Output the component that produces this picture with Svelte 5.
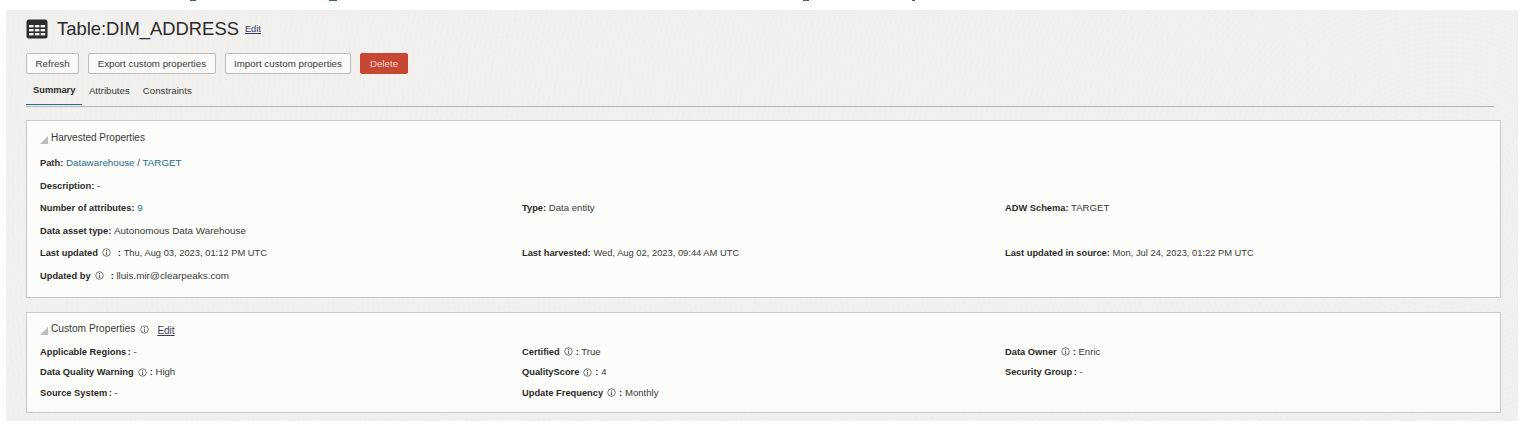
<script>
  const attrRow = [
    { label: 'Number of attributes:', value: '9', link: true },
    { label: 'Type:', value: 'Data entity' },
    { label: 'ADW Schema:', value: 'TARGET' }
  ];
  const customRows = [
    [{ label: 'Applicable Regions', value: '-' }, { label: 'Certified', info: true, value: 'True' }, { label: 'Data Owner', info: true, value: 'Enric' }],
    [{ label: 'Data Quality Warning', info: true, value: 'High' }, { label: 'QualityScore', info: true, value: '4' }, { label: 'Security Group', value: '-' }],
    [{ label: 'Source System', value: '-' }, { label: 'Update Frequency', info: true, value: 'Monthly' }, null]
  ];
</script>

{#snippet info()}
  <svg class="info" viewBox="0 0 10 10" width="9" height="9" aria-hidden="true">
    <circle cx="5" cy="5" r="4.2" fill="none" stroke="#444" stroke-width="0.8" />
    <path d="M5 4.3v3M4.2 7.3h1.6M4.3 4.3h.7" fill="none" stroke="#444" stroke-width="0.8" />
    <rect x="4.5" y="2.3" width="1" height="1" fill="#444" />
  </svg>
{/snippet}

{#snippet triangle()}
  <svg class="tri" viewBox="0 0 8 8" width="8" height="8" aria-hidden="true">
    <path d="M0 8L8 0V8Z" fill="#bdbdbb" />
  </svg>
{/snippet}

<!-- bottoms of the heading above, cut off by the top edge of the shot -->
<span class="cut c1"></span>
<span class="cut c2"></span>
<span class="cut c3"></span>
<span class="cut c4"></span>

<div class="page">
  <div class="title-row">
    <svg class="table-icon" viewBox="0 0 22 20" width="22" height="20" aria-hidden="true">
      <rect x="0.5" y="0.5" width="21" height="19" rx="2.5" fill="#2b2b2b" />
      <g fill="#f1f0ee">
        <rect x="3" y="6" width="4.6" height="2.4" /><rect x="8.8" y="6" width="4.6" height="2.4" /><rect x="14.6" y="6" width="4.6" height="2.4" />
        <rect x="3" y="10" width="4.6" height="2.4" /><rect x="8.8" y="10" width="4.6" height="2.4" /><rect x="14.6" y="10" width="4.6" height="2.4" />
        <rect x="3" y="14" width="4.6" height="2.4" /><rect x="8.8" y="14" width="4.6" height="2.4" /><rect x="14.6" y="14" width="4.6" height="2.4" />
      </g>
    </svg>
    <h1>Table:DIM_ADDRESS</h1>
    <a class="edit small" href="#edit">Edit</a>
  </div>

  <div class="actions">
    <button>Refresh</button>
    <button>Export custom properties</button>
    <button>Import custom properties</button>
    <button class="danger">Delete</button>
  </div>

  <div class="tabs">
    <span class="tab active">Summary</span>
    <span class="tab">Attributes</span>
    <span class="tab">Constraints</span>
  </div>

  <section class="panel harvested">
    <div class="panel-head">{@render triangle()}<span>Harvested Properties</span></div>
    <div class="row"><b>Path:</b> <a href="#p">Datawarehouse</a> / <a href="#t">TARGET</a></div>
    <div class="row"><b>Description:</b> -</div>
    <div class="grid">
      {#each attrRow as item}
        <div class="row"><b>{item.label}</b> {#if item.link}<a href="#n">{item.value}</a>{:else}{item.value}{/if}</div>
      {/each}
    </div>
    <div class="row"><b>Data asset type:</b> <span class="long">Autonomous Data Warehouse</span></div>
    <div class="grid">
      <div class="row"><b>Last updated</b>{@render info()}<b class="colon wide">:</b> <span class="date">Thu, Aug 03, 2023, 01:12 PM UTC</span></div>
      <div class="row"><b>Last harvested:</b> <span class="date">Wed, Aug 02, 2023, 09:44 AM UTC</span></div>
      <div class="row"><b>Last updated in source:</b> <span class="date">Mon, Jul 24, 2023, 01:22 PM UTC</span></div>
    </div>
    <div class="row"><b>Updated by</b>{@render info()}<b class="colon wide">:</b> <span class="long">lluis.mir@clearpeaks.com</span></div>
  </section>

  <section class="panel custom">
    <div class="panel-head">
      {@render triangle()}<span>Custom Properties</span>{@render info()}<a class="edit" href="#edit2">Edit</a>
    </div>
    {#each customRows as cols}
      <div class="grid">
        {#each cols as item}
          {#if item}
            <div class="row">
              <b>{item.label}</b>{#if item.info}{@render info()}{/if}<b class="colon" class:tight={!item.info}>:</b> {item.value}
            </div>
          {:else}
            <div></div>
          {/if}
        {/each}
      </div>
    {/each}
  </section>
</div>

<style>
  :global(body) { margin: 0; background: #fff; }
  .cut { position: absolute; top: 0; height: 1px; background: #3d6470; }
  .c1 { left: 190px; width: 6px; }
  .c2 { left: 329px; width: 8px; }
  .c3 { left: 803px; width: 6px; }
  .c4 { left: 912px; width: 3px; }
  .page {
    margin: 10px 10px 11px 6px;
    height: 411px;
    box-sizing: border-box;
    padding: 7px 17px 0 20px;
    background-color: #f0efed;
    background-image:
      repeating-radial-gradient(circle at 1440px 190px, rgba(255,255,255,.16) 0 1px, transparent 1px 5px),
      repeating-radial-gradient(circle at 500px 60px, rgba(255,255,255,.12) 0 1px, transparent 1px 6px);
    font-family: "Liberation Sans", Arial, sans-serif;
    font-size: 9.6px;
    color: #3a3a38;
  }
  .title-row { display: flex; align-items: center; height: 24px; }
  .table-icon { margin-right: 9px; }
  h1 { margin: 0; font-size: 18.4px; font-weight: 400; color: #2c2a28; }
  .edit { color: #3a3a5a; text-decoration: underline; font-size: 10px; margin-left: 6px; }
  .small { font-size: 9.3px; }
  .actions { display: flex; gap: 9px; margin-top: 12px; }
  button {
    height: 21px;
    padding: 0 8.5px;
    font: inherit;
    font-size: 9.75px;
    color: #3a3a38;
    background: #fafaf8;
    border: 1px solid #bdbcb9;
    border-radius: 2px;
  }
  button.danger { background: #c74634; border-color: #c74634; color: #f3d9d4; }
  .tabs {
    display: flex;
    margin-top: 5px;
    margin-right: 7px;
    border-bottom: 1px solid #b7b6b3;
    height: 28px;
    box-sizing: border-box;
  }
  .tab { padding: 6px 6.5px 0; height: 26px; box-sizing: border-box; font-size: 9.7px; }
  .tab.active { color: #2c2a28; font-weight: 700; font-size: 9.3px; padding: 6px 7px 0; border-bottom: 1px solid #256c8c; }
  .panel {
    background: #fcfcfa;
    border: 1px solid #c9c8c5;
    margin-top: 13px;
    padding: 0 13px;
    box-sizing: border-box;
  }
  .harvested { height: 178px; padding-top: 10px; }
  .custom { height: 101px; margin-top: 14px; padding-top: 9px; }
  .panel-head { display: flex; align-items: center; font-size: 10px; height: 12px; color: #3a3a38; }
  .custom .panel-head { font-size: 10.2px; margin-bottom: 8px; }
  .harvested .panel-head { margin-bottom: 9px; }
  .tri { margin-right: 3px; position: relative; top: 3px; }
  .panel-head .info { margin-left: 5px; margin-top: 3px; }
  .panel-head .edit { margin-left: 8px; margin-top: 4px; }
  .grid { display: grid; grid-template-columns: 482px 483px 1fr; }
  .row { height: 20.3px; line-height: 20.3px; white-space: nowrap; }
  .harvested .row { height: 22.5px; line-height: 22.5px; }
  b { font-weight: 700; font-size: 9.3px; color: #2c2a28; }
  a { color: #2b6c8e; text-decoration: none; }
  .row a { font-size: 9.8px; }
  .date { font-size: 9.35px; }
  .long { font-size: 9.9px; }
  .info { margin: 0 0 1px 4px; vertical-align: middle; }
  .colon { margin-left: 3px; }
  .colon.tight { margin-left: 1.5px; }
  .colon.wide { margin-left: 7px; }
</style>
